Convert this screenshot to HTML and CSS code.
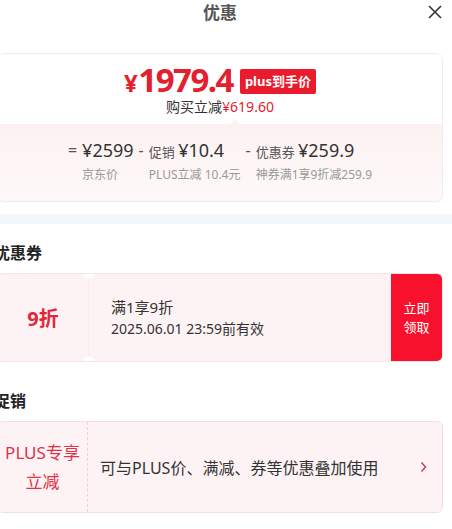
FILE: index.html
```html
<!DOCTYPE html>
<html lang="zh-CN">
<head>
	<meta charset="UTF-8">
	<title>优惠</title>
	<link rel="stylesheet" href="styles.css">
</head>
<body>
	<div class="sheet">
		<!-- 标题栏 -->
		<div class="head">
			<span></span>
			<h2 class="head_title">优惠</h2>
			<span class="close">
				<svg width="14" height="14" viewBox="0 0 14 14"><path d="M1 1L13 13M13 1L1 13" stroke="#333" stroke-width="1.6" fill="none"/></svg>
			</span>
		</div>

		<!-- 到手价 -->
		<div class="price_card">
			<div class="price_top">
				<div class="price_line">
					<span class="price"><span class="yen">¥</span>1979.4</span>
					<span class="badge">plus到手价</span>
				</div>
				<div class="save">购买立减<em>¥619.60</em></div>
			</div>
			<div class="price_bottom">
				<div class="calc">
					<div class="calc_item">
						<span class="op">=</span>
						<div>
							<div class="calc_top"><b>¥2599</b></div>
							<div class="calc_sub">京东价</div>
						</div>
					</div>
					<div class="calc_item">
						<span class="op">-</span>
						<div>
							<div class="calc_top">促销 <b>¥10.4</b></div>
							<div class="calc_sub">PLUS立减 10.4元</div>
						</div>
					</div>
					<div class="calc_item">
						<span class="op">-</span>
						<div>
							<div class="calc_top">优惠券 <b>¥259.9</b></div>
							<div class="calc_sub">神券满1享9折减259.9</div>
						</div>
					</div>
				</div>
			</div>
		</div>

		<div class="band"></div>

		<!-- 优惠券 -->
		<h3 class="sec_title">优惠券</h3>
		<div class="coupon">
			<div class="coupon_left">9折</div>
			<div class="coupon_cut"></div>
			<div class="coupon_info">
				<p class="coupon_name">满1享9折</p>
				<p class="coupon_date">2025.06.01 23:59前有效</p>
			</div>
			<div class="coupon_btn">立即<br>领取</div>
		</div>

		<!-- 促销 -->
		<h3 class="sec_title sec_title2">促销</h3>
		<div class="promo">
			<div class="promo_left">PLUS专享<br>立减</div>
			<div class="promo_text">可与PLUS价、满减、券等优惠叠加使用</div>
			<span class="promo_arrow">
				<svg width="7" height="12" viewBox="0 0 7 12"><path d="M1.5 1.5L5.5 6L1.5 10.5" stroke="#c8374a" stroke-width="1.4" fill="none"/></svg>
			</span>
		</div>
	</div>
</body>
</html>
```

FILE: styles.css
```css
* {
	margin: 0;
	padding: 0;
	box-sizing: border-box;
}

body {
	background-color: #fff;
	font-family: "Noto Sans", "Noto Sans CJK SC", sans-serif;
	color: #333;
	overflow: hidden;
}

/* 左边被截掉一点 */
.sheet {
	width: 464px;
	margin-left: -12px;
}

.head {
	display: grid;
	grid-template-columns: 1fr auto 1fr;
	align-items: center;
	height: 25px;
	margin-bottom: 28px;
}

.head_title {
	font-size: 17px;
	font-weight: bold;
	color: #555;
	line-height: 25px;
}

.close {
	justify-self: end;
	margin-right: 10px;
	height: 14px;
	margin-top: -1px;
}

.close svg {
	display: block;
}

.price_card {
	margin: 0 9px;
	border: 1px solid #ececec;
	border-radius: 7px;
	overflow: hidden;
}

.price_top {
	padding: 12px 0 6px;
	text-align: center;
}

.price_line {
	display: flex;
	justify-content: center;
	align-items: center;
	height: 30px;
}

.price {
	font-size: 33px;
	font-weight: bold;
	color: #e4202e;
	letter-spacing: -1.5px;
	line-height: 30px;
}

.yen {
	font-size: 24px;
	margin-right: 2px;
}

.badge {
	margin-left: 7px;
	background-color: #ea1b2d;
	color: #fff;
	font-size: 13px;
	font-weight: bold;
	height: 25px;
	line-height: 25px;
	padding: 0 5px;
	border-radius: 2px;
}

.save {
	font-size: 14px;
	line-height: 22px;
	color: #333;
}

.save em {
	font-style: normal;
	color: #e4202e;
}

.price_bottom {
	position: relative;
	background: linear-gradient(#fcf1f1, #fff9f9);
	padding: 14px 0 15px;
}

.price_bottom:before {
	content: "";
	position: absolute;
	left: 232px;
	top: -5px;
	border: 5px solid transparent;
	border-top: none;
	border-bottom-color: #fcf1f1;
}

.calc {
	display: flex;
	justify-content: center;
	gap: 5px;
}

.calc_item {
	display: flex;
}

.op {
	font-size: 16px;
	color: #555;
	line-height: 24px;
	margin-right: 5px;
}

.calc_top {
	font-size: 13px;
	color: #555;
	line-height: 24px;
}

.calc_top b {
	font-size: 18px;
	font-weight: normal;
	color: #333;
}

.calc_sub {
	font-size: 12px;
	color: #999;
	line-height: 22px;
}

.band {
	height: 10px;
	margin-top: 12px;
	background-color: #f4f7fb;
}

.sec_title {
	font-size: 16px;
	font-weight: bold;
	color: #222;
	line-height: 24px;
	padding-left: 6px;
	margin: 17px 0 8px;
}

.sec_title2 {
	margin-top: 27px;
}

.coupon {
	display: flex;
	margin: 0 9px;
	height: 89px;
	background-color: #fdf2f4;
	border: 1px solid #f6e4e7;
	border-radius: 6px;
	overflow: hidden;
}

.coupon_left {
	width: 90px;
	display: flex;
	align-items: center;
	justify-content: center;
	font-size: 20px;
	font-weight: bold;
	color: #e0283a;
}

.coupon_cut {
	position: relative;
	width: 1px;
	background-color: #fbeaed;
}

.coupon_cut:before,
.coupon_cut:after {
	content: "";
	position: absolute;
	left: -5px;
	width: 11px;
	height: 11px;
	border-radius: 50%;
	background-color: #fff;
}

.coupon_cut:before {
	top: -6px;
}

.coupon_cut:after {
	bottom: -6px;
}

.coupon_info {
	flex: 1;
	display: flex;
	flex-direction: column;
	justify-content: center;
	padding-left: 22px;
	color: #333;
}

.coupon_name {
	font-size: 15px;
	line-height: 22px;
}

.coupon_date {
	font-size: 14px;
	line-height: 22px;
}

.coupon_btn {
	width: 51px;
	background-color: #f8112c;
	color: #fff;
	font-size: 13px;
	line-height: 19px;
	display: flex;
	align-items: center;
	justify-content: center;
	text-align: center;
}

.promo {
	display: flex;
	align-items: center;
	margin: 0 9px;
	height: 92px;
	background-color: #fdf3f5;
	border: 1px solid #f1dfe3;
	border-radius: 6px;
}

.promo_left {
	width: 90px;
	height: 100%;
	display: flex;
	align-items: center;
	justify-content: center;
	text-align: center;
	font-size: 17px;
	line-height: 29px;
	color: #e03446;
	border-right: 1px dashed #ecd3d8;
}

.promo_text {
	flex: 1;
	padding-left: 12px;
	font-size: 16px;
	color: #333;
}

.promo_arrow {
	margin-right: 15px;
	height: 12px;
}

.promo_arrow svg {
	display: block;
}
```
